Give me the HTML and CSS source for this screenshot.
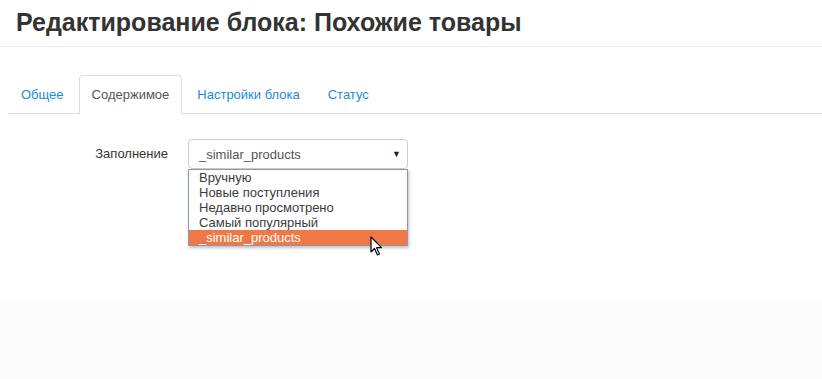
FILE: index.html
```html
<!DOCTYPE html>
<html lang="ru">
<head>
    <meta charset="UTF-8">
    <title>Редактирование блока: Похожие товары</title>
    <link rel="stylesheet" href="styles.css">
</head>
<body>
    <div class="page-header">
        <h1>Редактирование блока: Похожие товары</h1>
    </div>

    <div class="content">
        <ul class="nav-tabs">
            <li><a href="#">Общее</a></li>
            <li class="active"><a href="#">Содержимое</a></li>
            <li><a href="#">Настройки блока</a></li>
            <li><a href="#">Статус</a></li>
        </ul>

        <div class="form-row">
            <label class="form-label">Заполнение</label>
            <div class="select-wrap">
                <div class="select-box">
                    <span>_similar_products</span>
                    <span class="caret">&#9660;</span>
                </div>
                <ul class="select-list">
                    <li>Вручную</li>
                    <li>Новые поступления</li>
                    <li>Недавно просмотрено</li>
                    <li>Самый популярный</li>
                    <li class="selected">_similar_products</li>
                </ul>
                <svg class="cursor" width="14" height="21" viewBox="0 0 14 21">
                    <path d="M1 1 L1 16 L4.5 12.5 L7.5 19 L9.5 18 L6.6 11.7 L11.5 11.7 Z" fill="#fff" stroke="#000" stroke-width="1.2" stroke-linejoin="round"/>
                </svg>
            </div>
        </div>
    </div>
</body>
</html>
```

FILE: styles.css
```css
body {
    margin: 0;
    font-family: "Liberation Sans", Arial, sans-serif;
    font-size: 13px;
    color: #333;
    background-color: #fcfcfc;
}
.page-header {
    background-color: #fff;
    border-bottom: 1px solid #eee;
    padding: 8px 16px 9px;
}
.page-header h1 {
    margin: 0;
    font-size: 25px;
    line-height: 29px;
    font-weight: bold;
    color: #333;
}
.content {
    background-color: #fff;
    padding: 28px 0 0 8px;
}
.nav-tabs {
    list-style: none;
    margin: 0;
    padding: 0;
    display: flex;
    border-bottom: 1px solid #ddd;
}
.nav-tabs li {
    margin-right: 2px;
    margin-bottom: -1px;
}
.nav-tabs a {
    display: block;
    padding: 10px 12px;
    line-height: 17px;
    color: #1a8cd8;
    text-decoration: none;
    border: 1px solid transparent;
    border-radius: 4px 4px 0 0;
}
.nav-tabs .active a {
    color: #555;
    background-color: #fff;
    border-color: #ddd #ddd transparent;
}
.form-row {
    display: flex;
    align-items: flex-start;
    padding-top: 25px;
    padding-bottom: 131px;
}
.form-label {
    width: 160px;
    text-align: right;
    line-height: 30px;
    padding-right: 20px;
}
.select-wrap {
    position: relative;
    width: 220px;
}
.select-box {
    display: flex;
    justify-content: space-between;
    align-items: center;
    height: 28px;
    padding: 0 6px 0 10px;
    border: 1px solid #ccc;
    border-radius: 4px;
    background-color: #fff;
    color: #555;
}
.caret {
    font-size: 9px;
    color: #222;
}
.select-list {
    position: absolute;
    top: 30px;
    left: 0;
    width: 218px;
    margin: 0;
    padding: 0;
    list-style: none;
    background-color: #fff;
    border: 1px solid #8a9aaa;
    box-shadow: 1px 2px 3px rgba(0,0,0,0.25);
    color: #3c3c3c;
}
.select-list li {
    height: 15px;
    line-height: 15px;
    padding-left: 10px;
}
.select-list .selected {
    background-color: #f07746;
    color: #fff;
}
.cursor {
    position: absolute;
    left: 182px;
    top: 97px;
}
```
